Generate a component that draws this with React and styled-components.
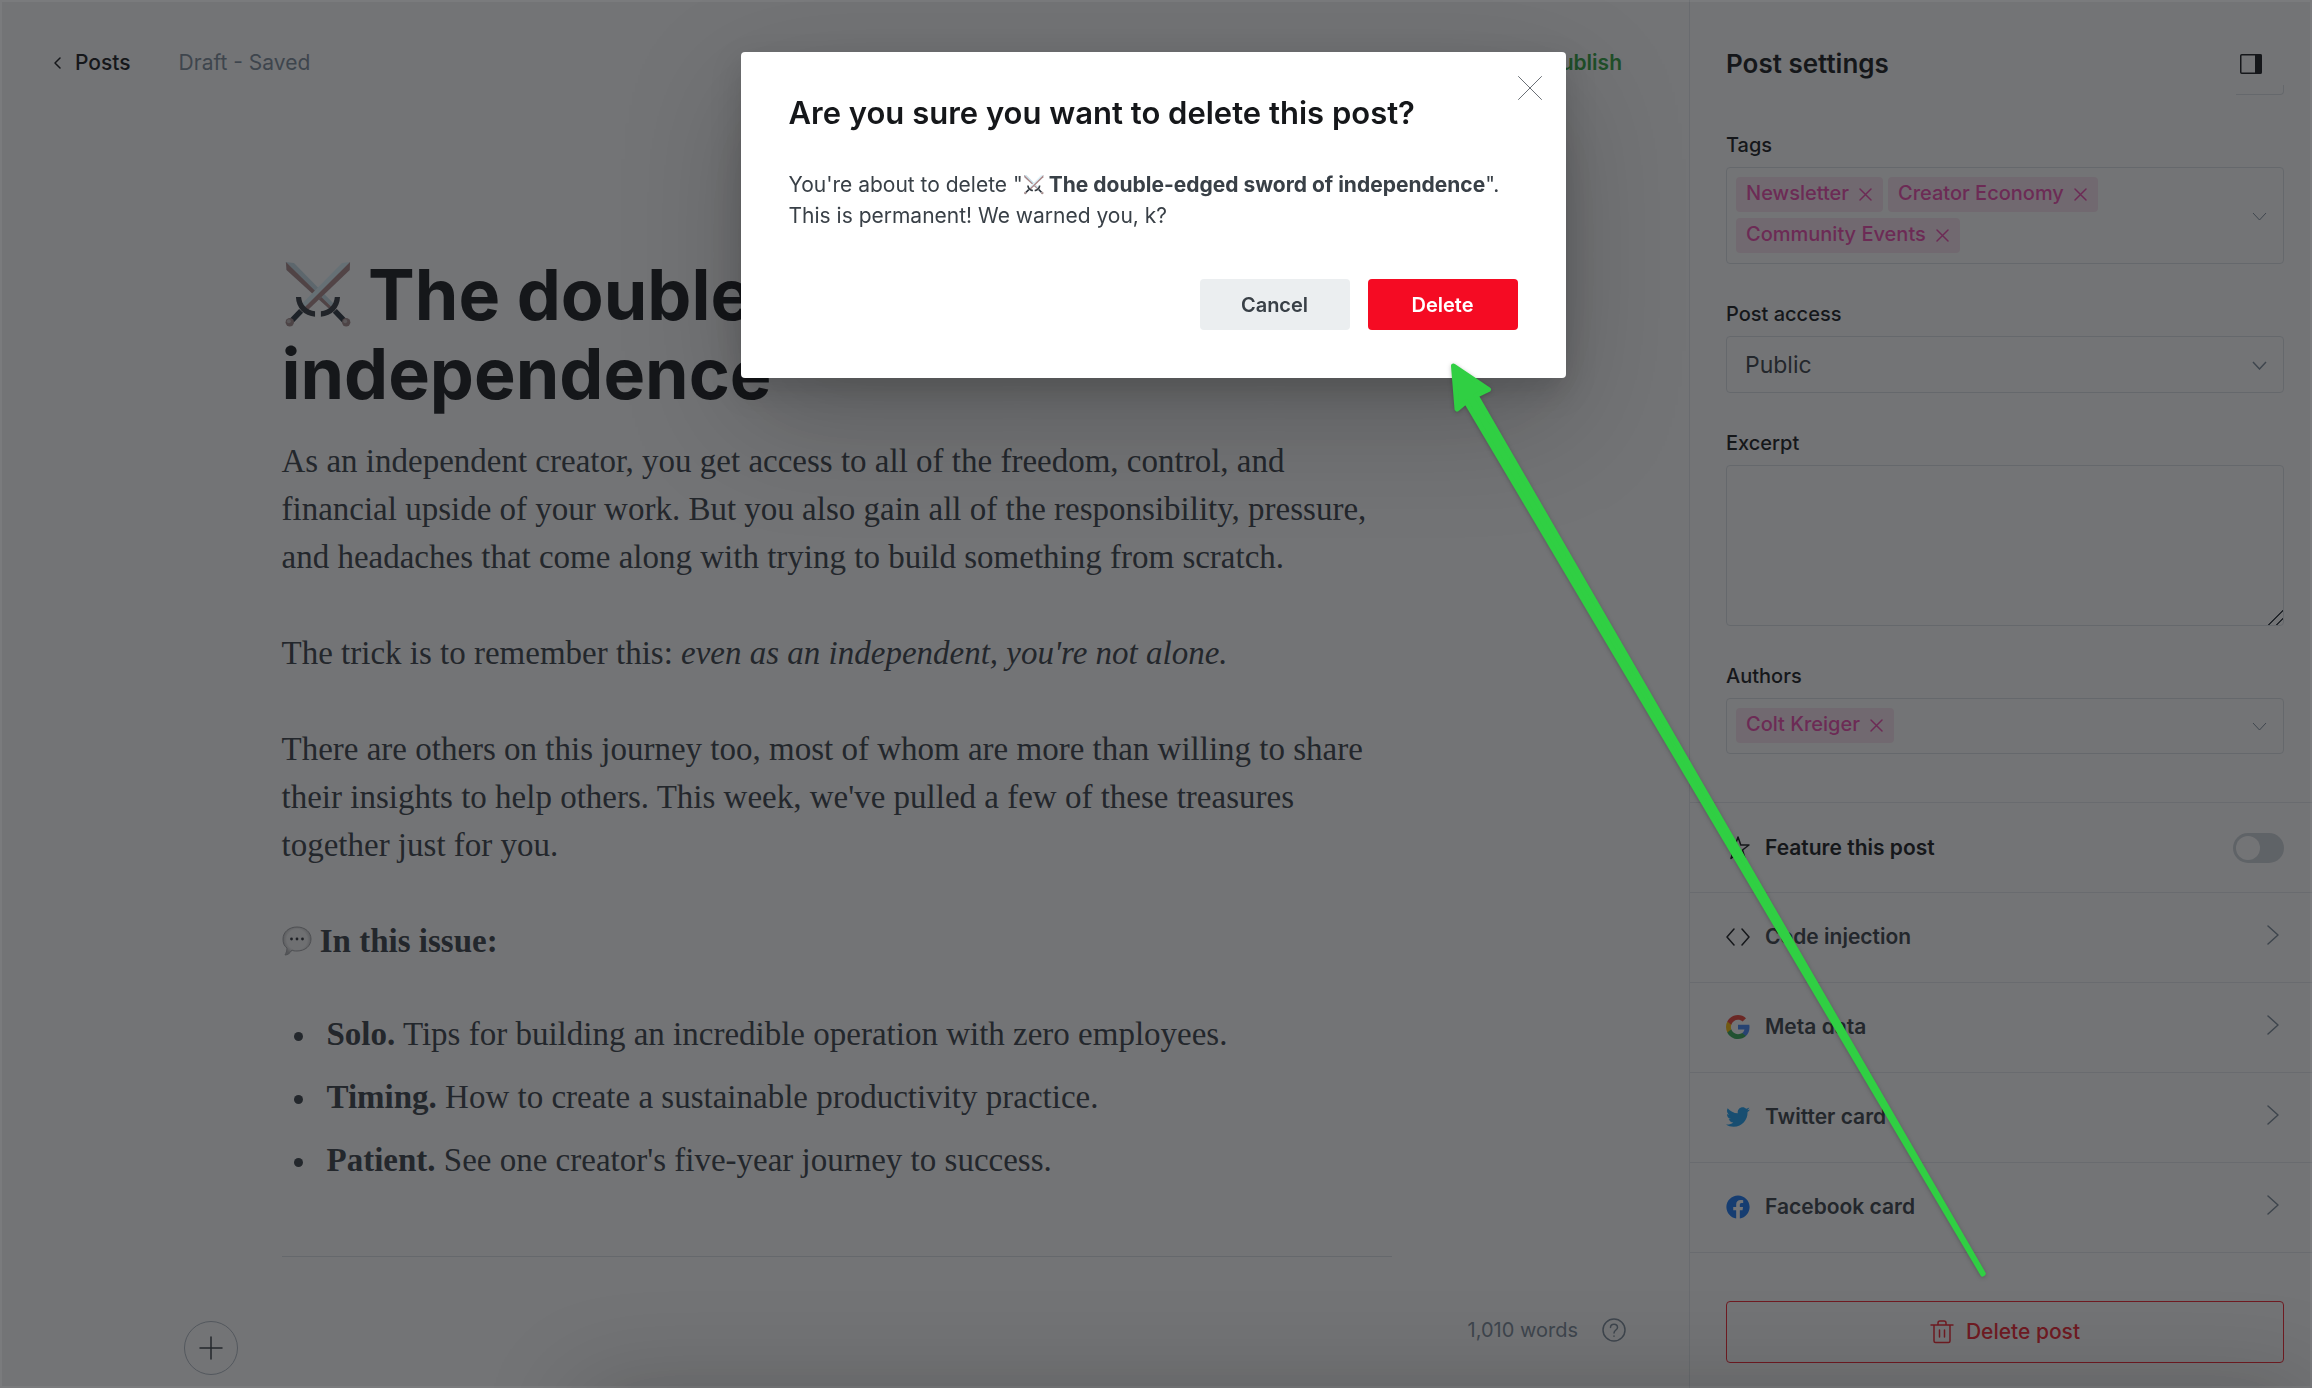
import React, { useState } from 'react';
import styled, { createGlobalStyle } from 'styled-components';
import { FaFacebook, FaTwitter } from 'react-icons/fa';

const GlobalStyle = createGlobalStyle`
  *, *::before, *::after {
    box-sizing: border-box;
  }

  body {
    margin: 0;
    background: #fff;
    color: #15171a;
    font-family: Inter, "Liberation Sans", sans-serif;
    font-size: 21px;
    line-height: 24px;
  }

  button, input, select, textarea {
    font: inherit;
    color: inherit;
  }

  a {
    color: inherit;
    text-decoration: none;
  }
`;

const Page = styled.div`
  display: flex;
  min-height: 100vh;
`;

/* Editor */

const Editor = styled.main`
  flex: 1;
  min-width: 0;
  display: flex;
  flex-direction: column;
`;

const TopBar = styled.header`
  display: flex;
  align-items: center;
  height: 126px;
  padding: 0 67px 0 52px;
`;

const BackLink = styled.a`
  display: flex;
  align-items: center;
  gap: 13px;
  font-weight: 500;
`;

const SaveState = styled.span`
  margin-left: 48px;
  color: #7c8b9a;
`;

const PublishButton = styled.button`
  margin-left: auto;
  padding: 0;
  border: 0;
  background: none;
  color: #30a43f;
  font-weight: 600;
`;

const Scroller = styled.div`
  flex: 1;
  padding: 129px 16px 0 0;
`;

const Article = styled.article`
  max-width: 1110px;
  margin: 0 auto;
  color: #394047;
  font-family: Georgia, "Liberation Serif", serif;
  font-size: 33px;
  line-height: 48px;

  p {
    margin: 0 0 48px;
  }

  p:last-of-type {
    margin-bottom: 45px;
  }

  hr {
    margin: 0;
    border: 0;
    border-top: 1px solid #dde1e5;
  }
`;

const BulletList = styled.ul`
  display: flex;
  flex-direction: column;
  gap: 15px;
  margin: 0 0 72px;
  padding: 0 0 0 45px;
  list-style: none;

  li::before {
    content: '';
    display: inline-block;
    width: 9px;
    height: 9px;
    margin: 0 24px 0 -33px;
    border-radius: 50%;
    background: currentColor;
    vertical-align: 4px;
  }
`;

const PostTitle = styled.h1`
  margin: 0 0 24px;
  color: #15171a;
  font-family: Inter, "Liberation Sans", sans-serif;
  font-size: 70px;
  font-weight: 700;
  line-height: 79px;
`;

const Emoji = styled.svg`
  width: 1em;
  height: 1em;
  vertical-align: -0.125em;
`;

const BubbleEmoji = styled(Emoji)`
  font-size: 30px;
`;

const EditorFooter = styled.footer`
  display: flex;
  align-items: flex-end;
  justify-content: space-between;
  padding: 0 63px 13px 184px;
`;

const AddCard = styled.button`
  display: grid;
  place-items: center;
  width: 54px;
  height: 54px;
  padding: 0;
  border: 1px solid #aeb7c1;
  border-radius: 50%;
  background: none;
  color: #394047;
`;

const WordCount = styled.div`
  display: flex;
  align-items: center;
  gap: 24px;
  padding-bottom: 33px;
  color: #7c8b9a;
  font-size: 20px;
`;

const HelpLink = styled.a`
  display: flex;
`;

/* Settings sidebar */

const Sidebar = styled.aside`
  flex: none;
  width: 623px;
  border-left: 1px solid #e5e9ed;
`;

const SidebarHeader = styled.div`
  display: flex;
  align-items: center;
  justify-content: space-between;
  height: 85px;
  padding: 42px 28px 0 36px;
`;

const SidebarTitle = styled.h2`
  margin: 0;
  font-size: 26px;
  font-weight: 600;
`;

const IconButton = styled.button`
  display: flex;
  padding: 0 22px 0 0;
  border: 0;
  background: none;
`;

const Fields = styled.div`
  display: flex;
  flex-direction: column;
  gap: 38px;
  padding: 0 28px 48px 36px;
`;

// bottom edge of the url field that is scrolled under the header
const ScrolledField = styled.div`
  align-self: flex-end;
  width: 48px;
  height: 10px;
  border: solid #dde1e5;
  border-width: 0 1px 1px 0;
  border-radius: 0 0 4px 0;
`;

const Field = styled.div`
  display: flex;
  flex-direction: column;
  gap: 10px;

  label {
    font-size: 20px;
    font-weight: 500;
  }
`;

const ControlWrap = styled.div`
  position: relative;
  display: flex;
`;

const DropIcon = styled.svg`
  position: absolute;
  right: 17px;
  top: 50%;
  margin-top: -4px;
  color: #7c8b9a;
  pointer-events: none;
`;

const TokenBox = styled.div`
  flex: 1;
  display: flex;
  flex-wrap: wrap;
  gap: 6px 5px;
  padding: 9px 60px 10px 9px;
  border: 1px solid #dde1e5;
  border-radius: 4px;
`;

const Token = styled.span`
  display: flex;
  align-items: center;
  gap: 10px;
  height: 35px;
  padding: 0 11px 3px 10px;
  border-radius: 4px;
  background: #fae4f0;
  color: #ee49ad;
  font-size: 20px;
  font-weight: 500;
`;

const TokenRemove = styled.button`
  display: flex;
  padding: 3px 0 0;
  border: 0;
  background: none;
`;

const TokenInput = styled.input`
  width: 40px;
  padding: 0;
  border: 0;
  outline: 0;
  background: none;
`;

const Select = styled.select`
  flex: 1;
  height: 57px;
  padding: 0 18px;
  border: 1px solid #dde1e5;
  border-radius: 4px;
  background: none;
  color: #394047;
  font-size: 23px;
  appearance: none;
`;

const TextArea = styled.textarea`
  height: 161px;
  padding: 12px 18px;
  border: 1px solid #dde1e5;
  border-radius: 4px;
  background: none;
  resize: vertical;

  &::-webkit-resizer {
    background: linear-gradient(
      135deg,
      transparent 48%,
      #394047 48% 55%,
      transparent 55% 74%,
      #394047 74% 81%,
      transparent 81%
    );
  }
`;

const rowStyles = `
  display: flex;
  align-items: center;
  gap: 15px;
  width: 100%;
  height: 90px;
  border: 0;
  border-top: 1px solid #e5e9ed;
  font-weight: 600;
`;

const ToggleRow = styled.label`
  ${rowStyles}
  padding: 0 28px 0 36px;
`;

const LinkRow = styled.button`
  ${rowStyles}
  padding: 0 33px 2px 36px;
  background: none;
  color: #394047;
`;

const RowIcon = styled.span`
  display: flex;
  color: ${p => p.$color || '#15171a'};
`;

const RowArrow = styled.span`
  display: flex;
  margin-left: auto;
  padding-bottom: 4px;
  color: #7c8b9a;
`;

const Toggle = styled.input`
  appearance: none;
  width: 51px;
  height: 30px;
  margin: 0 0 0 auto;
  border-radius: 15px;
  background: #ced4d9;

  &::before {
    content: '';
    display: block;
    width: 24px;
    height: 24px;
    margin: 3px;
    border-radius: 50%;
    background: #fff;
  }

  &:checked {
    background: #30cf43;
  }

  &:checked::before {
    margin-left: 24px;
  }
`;

const DeleteArea = styled.div`
  padding: 48px 28px 24px 36px;
  border-top: 1px solid #e5e9ed;
`;

const DeletePostButton = styled.button`
  display: flex;
  align-items: center;
  justify-content: center;
  gap: 12px;
  width: 100%;
  height: 62px;
  border: 1px solid #f5222e;
  border-radius: 4px;
  background: none;
  color: #f5222e;
  font-weight: 500;
`;

/* Modal */

const Overlay = styled.div`
  position: fixed;
  inset: 0;
  overflow: hidden;
  display: flex;
  align-items: flex-start;
  justify-content: center;
  padding: 52px 6px 0 0;
  background: rgba(21, 23, 26, 0.6);
  box-shadow: inset 0 0 0 2px rgba(255, 255, 255, 0.05);
`;

const BottomShade = styled.div`
  position: absolute;
  top: 100%;
  left: 25%;
  right: 0;
  height: 100px;
  box-shadow: 0 0 100px rgba(0, 0, 0, 0.2);
`;

const Modal = styled.section`
  position: relative;
  width: 825px;
  padding: 42px 48px 48px;
  border-radius: 4px;
  background: #fff;
  box-shadow: 0 40px 120px rgba(0, 0, 0, 0.22), 0 12px 32px rgba(0, 0, 0, 0.16);
`;

const ModalTitle = styled.h2`
  margin: 0 0 38px;
  font-size: 31px;
  font-weight: 600;
  line-height: 37px;
`;

const ModalText = styled.p`
  margin: 0 0 48px;
  color: #394047;
  line-height: 31px;
`;

const ModalActions = styled.div`
  display: flex;
  justify-content: flex-end;
  gap: 18px;
`;

const ModalButton = styled.button`
  width: 150px;
  height: 51px;
  border: 0;
  border-radius: 4px;
  background: ${p => (p.$danger ? '#f50b23' : '#ebeef0')};
  color: ${p => (p.$danger ? '#fff' : '#394047')};
  font-size: 20px;
  font-weight: 600;
`;

const CloseButton = styled.button`
  position: absolute;
  top: 24px;
  right: 24px;
  display: flex;
  padding: 0;
  border: 0;
  background: none;
  color: #6b7076;
`;

const Pointer = styled.svg`
  position: absolute;
  top: 360px;
  left: calc(50% + 293px);
  width: 540px;
  height: 920px;
  filter: drop-shadow(0 1px 2px rgba(0, 0, 0, 0.25));
  pointer-events: none;
`;

/* Drawings */

const Swords = () => (
  <Emoji viewBox="36 39 216 216" role="img" aria-label="crossed swords">
    <path d="M48 48 L73 51 L205 186 L188 199 L50 73 Z" fill="#c9dfe9" />
    <path d="M48 48 L50 73 L188 199 L195 193 Z" fill="#a98686" />
    <path d="M246 48 L221 51 L93 182 L112 200 L245 73 Z" fill="#dff4fc" />
    <path d="M246 48 L245 73 L112 200 L103 191 Z" fill="#ac8788" />
    <path d="M95 199 L66 229 M199 199 L228 229" stroke="#2a323c" strokeWidth="17" />
    <path d="M79 156 H95 C97 180 113 198 138 200 V217 C104 214 80 190 79 156 Z" fill="#33393f" />
    <path d="M215 156 H199 C197 180 181 198 156 200 V217 C190 214 214 190 215 156 Z" fill="#33393f" />
    <circle cx="60" cy="234" r="13" fill="#a08888" />
    <circle cx="234" cy="234" r="13" fill="#a08888" />
    <circle cx="57" cy="231" r="6" fill="#c4b8b8" />
    <circle cx="231" cy="231" r="6" fill="#c4b8b8" />
  </Emoji>
);

const SpeechBubble = () => (
  <BubbleEmoji viewBox="0 0 30 30" role="img" aria-label="speech bubble">
    <defs>
      <radialGradient id="bubble" cx="50%" cy="45%" r="55%">
        <stop offset="65%" stopColor="#f6f6f6" />
        <stop offset="100%" stopColor="#b4b4b6" />
      </radialGradient>
    </defs>
    <path
      d="M15 1 C23 1 29 6 29 13 C29 20 23 25 15 25 C13 25 11 25 10 24 C8 27 6 29 3 29 C4 27 5 25 5 22 C2 20 1 17 1 13 C1 6 7 1 15 1 Z"
      fill="url(#bubble)"
      stroke="#a2a3a6"
      strokeWidth="1"
    />
    <g fill="#30343a">
      <circle cx="9.5" cy="13" r="1.4" />
      <circle cx="15" cy="13" r="1.4" />
      <circle cx="20.5" cy="13" r="1.4" />
    </g>
  </BubbleEmoji>
);

const Line = ({ w, h, d, sw = 1.5 }) => (
  <svg width={w} height={h} viewBox={`0 0 ${w} ${h}`} fill="none" stroke="currentColor" strokeWidth={sw} strokeLinecap="round" strokeLinejoin="round" aria-hidden="true">
    <path d={d} />
  </svg>
);

const ChevronDown = ({ sw }) => (
  <DropIcon width="15" height="9" viewBox="0 0 15 9" fill="none" stroke="currentColor" strokeWidth={sw} aria-hidden="true">
    <path d="M1 1 L7.5 8 L14 1" />
  </DropIcon>
);

const GoogleIcon = () => (
  <svg width="24" height="24" viewBox="1 1 22 22" aria-hidden="true">
    <path fill="#4285F4" d="M22.56 12.25c0-.78-.07-1.53-.2-2.25H12v4.26h5.92c-.26 1.37-1.04 2.53-2.21 3.31v2.77h3.57c2.08-1.92 3.28-4.74 3.28-8.09z" />
    <path fill="#34A853" d="M12 23c2.97 0 5.46-.98 7.28-2.66l-3.57-2.77c-.98.66-2.23 1.06-3.71 1.06-2.86 0-5.29-1.93-6.16-4.53H2.18v2.84C3.99 20.53 7.7 23 12 23z" />
    <path fill="#FBBC05" d="M5.84 14.09c-.22-.66-.35-1.36-.35-2.09s.13-1.43.35-2.09V7.07H2.18C1.43 8.55 1 10.22 1 12s.43 3.45 1.18 4.93l2.85-2.22.81-.62z" />
    <path fill="#EA4335" d="M12 5.38c1.62 0 3.06.56 4.21 1.64l3.15-3.15C17.45 2.09 14.97 1 12 1 7.7 1 3.99 3.47 2.18 7.07l3.66 2.84c.87-2.6 3.3-4.53 6.16-4.53z" />
  </svg>
);

const LINKS = [
  { label: 'Code injection', icon: <Line w={24} h={18} d="M8 1 L1 9 L8 17 M16 1 L23 9 L16 17" /> },
  { label: 'Meta data', icon: <GoogleIcon /> },
  { label: 'Twitter card', icon: <FaTwitter size={24} />, color: '#1da1f2' },
  { label: 'Facebook card', icon: <FaFacebook size={24} />, color: '#1877f2' },
];

const TokenField = ({ id, label, items }) => (
  <Field>
    <label htmlFor={id}>{label}</label>
    <ControlWrap>
      <TokenBox>
        {items.map(item => (
          <Token key={item}>
            {item}
            <TokenRemove type="button" aria-label={`Remove ${item}`}>
              <Line w={13} h={13} d="M1 1 L12 12 M12 1 L1 12" />
            </TokenRemove>
          </Token>
        ))}
        <TokenInput id={id} type="text" />
      </TokenBox>
      <ChevronDown sw={1} />
    </ControlWrap>
  </Field>
);

const App = () => {
  const [featured, setFeatured] = useState(false);
  const [excerpt, setExcerpt] = useState('');

  return (
    <>
      <GlobalStyle />
      <Page>
        <Editor>
          <TopBar>
            <BackLink href="#posts">
              <Line w={10} h={12} d="M8 1 L3 6 L8 11" />
              Posts
            </BackLink>
            <SaveState>Draft - Saved</SaveState>
            <PublishButton type="button">Publish</PublishButton>
          </TopBar>

          <Scroller>
            <Article>
              <PostTitle><Swords /> The double-edged sword of independence</PostTitle>
              <p>
                As an independent creator, you get access to all of the freedom, control, and
                financial upside of your work. But you also gain all of the responsibility, pressure,
                and headaches that come along with trying to build something from scratch.
              </p>
              <p>
                The trick is to remember this: <em>even as an independent, you're not alone.</em>
              </p>
              <p>
                There are others on this journey too, most of whom are more than willing to share
                their insights to help others. This week, we've pulled a few of these treasures
                together just for you.
              </p>
              <p><SpeechBubble /> <strong>In this issue:</strong></p>
              <BulletList>
                <li><strong>Solo.</strong> Tips for building an incredible operation with zero employees.</li>
                <li><strong>Timing.</strong> How to create a sustainable productivity practice.</li>
                <li><strong>Patient.</strong> See one creator's five-year journey to success.</li>
              </BulletList>
              <hr />
            </Article>
          </Scroller>

          <EditorFooter>
            <AddCard type="button" aria-label="Add a card">
              <Line w={24} h={24} d="M12 1 V23 M1 12 H23" />
            </AddCard>
            <WordCount>
              1,010 words
              <HelpLink href="#help" aria-label="Help">
                <Line w={24} h={24} d="M12 1 A11 11 0 1 1 12 23 A11 11 0 1 1 12 1 M8.5 9.5 C8.5 5 15.5 5 15.5 9.5 C15.5 12 12 12 12 15 M12 18 V18.2" />
              </HelpLink>
            </WordCount>
          </EditorFooter>
        </Editor>

        <Sidebar>
          <SidebarHeader>
            <SidebarTitle>Post settings</SidebarTitle>
            <IconButton type="button" aria-label="Toggle settings">
              <svg width="22" height="20" viewBox="0 0 22 20" aria-hidden="true">
                <rect x="0.75" y="0.75" width="20.5" height="18.5" rx="1" fill="none" stroke="#15171a" strokeWidth="1.5" />
                <path d="M15 0.5 H21.5 V19.5 H15 Z" fill="#15171a" />
              </svg>
            </IconButton>
          </SidebarHeader>

          <Fields>
            <ScrolledField />
            <TokenField id="tags" label="Tags" items={['Newsletter', 'Creator Economy', 'Community Events']} />
            <Field>
              <label htmlFor="access">Post access</label>
              <ControlWrap>
                <Select id="access" defaultValue="Public">
                  <option>Public</option>
                </Select>
                <ChevronDown sw={1.5} />
              </ControlWrap>
            </Field>
            <Field>
              <label htmlFor="excerpt">Excerpt</label>
              <TextArea id="excerpt" value={excerpt} onChange={e => setExcerpt(e.target.value)} />
            </Field>
            <TokenField id="authors" label="Authors" items={['Colt Kreiger']} />
          </Fields>

          <ToggleRow>
            <RowIcon>
              <Line w={24} h={24} d="M12 1 L14.8 9 H23 L16.5 14 L19 22.5 L12 17.5 L5 22.5 L7.5 14 L1 9 H9.2 Z" />
            </RowIcon>
            Feature this post
            <Toggle type="checkbox" checked={featured} onChange={e => setFeatured(e.target.checked)} />
          </ToggleRow>
          {LINKS.map(({ label, icon, color }) => (
            <LinkRow key={label} type="button">
              <RowIcon $color={color}>{icon}</RowIcon>
              {label}
              <RowArrow><Line w={12} h={20} d="M1 1 L11 10 L1 19" /></RowArrow>
            </LinkRow>
          ))}

          <DeleteArea>
            <DeletePostButton type="button">
              <Line w={24} h={24} d="M1 5 H23 M4 5 V21 Q4 22.5 5.5 22.5 H18.5 Q20 22.5 20 21 V5 M8 5 V3 Q8 1 10 1 H14 Q16 1 16 3 V5 M9.5 10 V17 M14.5 10 V17" />
              Delete post
            </DeletePostButton>
          </DeleteArea>
        </Sidebar>
      </Page>

      <Overlay>
        <BottomShade />
        <Modal role="dialog" aria-modal="true" aria-labelledby="modal-title">
          <ModalTitle id="modal-title">Are you sure you want to delete this post?</ModalTitle>
          <ModalText>
            You're about to delete "<strong><Swords /> The double-edged sword of independence</strong>".
            <br />
            This is permanent! We warned you, k?
          </ModalText>
          <ModalActions>
            <ModalButton type="button">Cancel</ModalButton>
            <ModalButton type="button" $danger>Delete</ModalButton>
          </ModalActions>
          <CloseButton type="button" aria-label="Close">
            <Line w={24} h={24} d="M0.5 0.5 L23.5 23.5 M23.5 0.5 L0.5 23.5" sw={1} />
          </CloseButton>
        </Modal>
        <Pointer viewBox="0 0 540 920" aria-hidden="true">
          <path
            d="M4.5 6 L39.5 29.5 L27 35.5 L534.2 913.6 L533.6 914 L17 41.5 L8 49 Z"
            fill="#30cf43"
            stroke="#30cf43"
            strokeWidth="5"
            strokeLinejoin="round"
          />
        </Pointer>
      </Overlay>
    </>
  );
};

export default App;
